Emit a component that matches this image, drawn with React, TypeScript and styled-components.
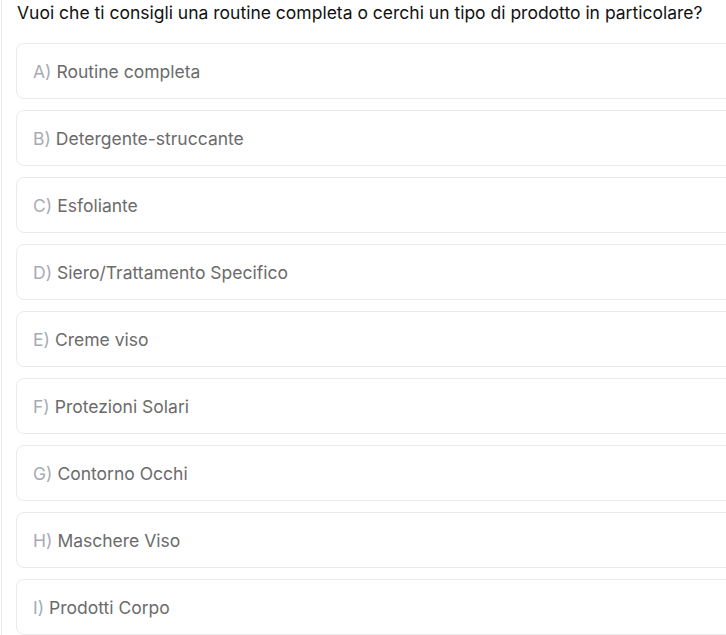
import React from 'react';
import styled, { createGlobalStyle } from 'styled-components';

const GlobalStyle = createGlobalStyle`
  html, body {
    margin: 0;
    padding: 0;
    background: #ffffff;
  }
  body {
    font-family: Inter, "Noto Sans", sans-serif;
    -webkit-font-smoothing: antialiased;
  }
`;

const Panel = styled.div`
  margin-left: 1px;
  border-left: 1px solid #e5e7eb;
  min-height: 635px;
  padding: 0 0 0 14px;
  box-sizing: border-box;
  overflow: hidden;
`;

const Question = styled.h2`
  margin: 0 0 17px 1px;
  font-size: 17.5px;
  line-height: 26px;
  font-weight: 400;
  color: #111111;
  white-space: nowrap;
`;

const Options = styled.div`
  display: flex;
  flex-direction: column;
  gap: 11px;
  width: 760px;
`;

const Option = styled.button`
  display: flex;
  align-items: center;
  height: 56px;
  padding: 0 16px;
  border: 1px solid #ebebeb;
  border-radius: 8px;
  background: #ffffff;
  font-family: inherit;
  font-size: 17.5px;
  color: #6b6b6b;
  text-align: left;
  cursor: pointer;
`;

const Letter = styled.span`
  color: #a7abb3;
  margin-right: 5px;
`;

const options = [
  ['A', 'Routine completa'],
  ['B', 'Detergente-struccante'],
  ['C', 'Esfoliante'],
  ['D', 'Siero/Trattamento Specifico'],
  ['E', 'Creme viso'],
  ['F', 'Protezioni Solari'],
  ['G', 'Contorno Occhi'],
  ['H', 'Maschere Viso'],
  ['I', 'Prodotti Corpo'],
];

export default function App() {
  return (
    <>
      <GlobalStyle />
      <Panel>
        <Question>
          Vuoi che ti consigli una routine completa o cerchi un tipo di prodotto in particolare?
        </Question>
        <Options>
          {options.map(([letter, label]) => (
            <Option key={letter}>
              <Letter>{letter})</Letter>
              {label}
            </Option>
          ))}
        </Options>
      </Panel>
    </>
  );
}
